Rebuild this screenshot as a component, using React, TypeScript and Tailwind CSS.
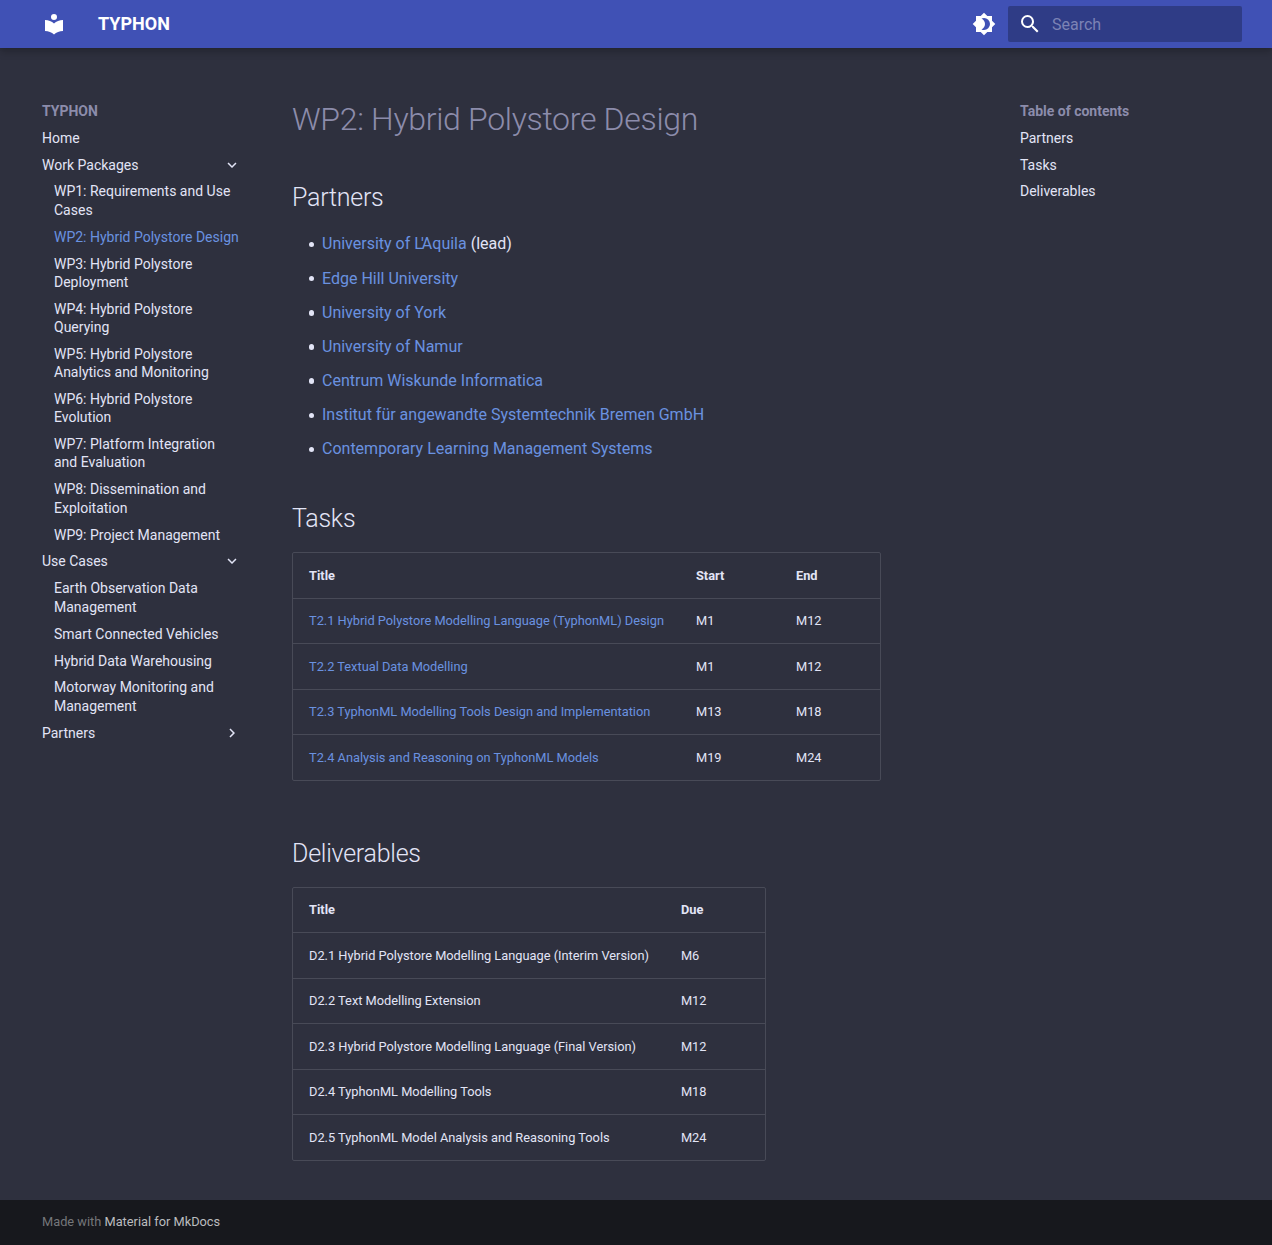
import React from "react";

type IconProps = { d: string; className?: string };

function Icon({ d, className = "size-6" }: IconProps) {
  return (
    <svg viewBox="0 0 24 24" className={`block shrink-0 fill-current ${className}`} aria-hidden="true">
      <path d={d} />
    </svg>
  );
}

const LIBRARY =
  "M12 8a3 3 0 0 0 3-3 3 3 0 0 0-3-3 3 3 0 0 0-3 3 3 3 0 0 0 3 3m0 3.54C9.64 9.35 6.5 8 3 8v11c3.5 0 6.64 1.35 9 3.54 2.36-2.19 5.5-3.54 9-3.54V8c-3.5 0-6.64 1.35-9 3.54Z";
const BRIGHTNESS =
  "M12 18c-.89 0-1.74-.2-2.5-.55C11.56 16.5 13 14.42 13 12c0-2.42-1.44-4.5-3.5-5.45C10.26 6.2 11.11 6 12 6a6 6 0 0 1 6 6 6 6 0 0 1-6 6m8-9.31V4h-4.69L12 .69 8.69 4H4v4.69L.69 12 4 15.31V20h4.69L12 23.31 15.31 20H20v-4.69L23.31 12 20 8.69Z";
const MAGNIFY =
  "M9.5 3A6.5 6.5 0 0 1 16 9.5c0 1.61-.59 3.09-1.56 4.23l.27.27h.79l5 5-1.5 1.5-5-5v-.79l-.27-.27A6.516 6.516 0 0 1 9.5 16 6.5 6.5 0 0 1 3 9.5 6.5 6.5 0 0 1 9.5 3m0 2C7 5 5 7 5 9.5S7 14 9.5 14 14 12 14 9.5 12 5 9.5 5Z";
const CHEVRON = "M8.59 16.58 13.17 12 8.59 7.41 10 6l6 6-6 6-1.41-1.42Z";

type NavItem = { label: string; open?: boolean; children?: string[] };

const NAV: NavItem[] = [
  { label: "Home" },
  {
    label: "Work Packages",
    open: true,
    children: [
      "WP1: Requirements and Use Cases",
      "WP2: Hybrid Polystore Design",
      "WP3: Hybrid Polystore Deployment",
      "WP4: Hybrid Polystore Querying",
      "WP5: Hybrid Polystore Analytics and Monitoring",
      "WP6: Hybrid Polystore Evolution",
      "WP7: Platform Integration and Evaluation",
      "WP8: Dissemination and Exploitation",
      "WP9: Project Management",
    ],
  },
  {
    label: "Use Cases",
    open: true,
    children: [
      "Earth Observation Data Management",
      "Smart Connected Vehicles",
      "Hybrid Data Warehousing",
      "Motorway Monitoring and Management",
    ],
  },
  { label: "Partners", open: false },
];
const ACTIVE = "WP2: Hybrid Polystore Design";

const PARTNERS = [
  "Edge Hill University",
  "University of York",
  "University of Namur",
  "Centrum Wiskunde Informatica",
  "Institut für angewandte Systemtechnik Bremen GmbH",
  "Contemporary Learning Management Systems",
];

const TASKS = [
  ["T2.1 Hybrid Polystore Modelling Language (TyphonML) Design", "M1", "M12"],
  ["T2.2 Textual Data Modelling", "M1", "M12"],
  ["T2.3 TyphonML Modelling Tools Design and Implementation", "M13", "M18"],
  ["T2.4 Analysis and Reasoning on TyphonML Models", "M19", "M24"],
];
const DELIVERABLES = [
  ["D2.1 Hybrid Polystore Modelling Language (Interim Version)", "M6"],
  ["D2.2 Text Modelling Extension", "M12"],
  ["D2.3 Hybrid Polystore Modelling Language (Final Version)", "M12"],
  ["D2.4 TyphonML Modelling Tools", "M18"],
  ["D2.5 TyphonML Model Analysis and Reasoning Tools", "M24"],
];

function Header() {
  return (
    <header className="relative z-10 h-12 bg-[#4051b5] text-white shadow-[0_0_4px_#0000001a,0_4px_8px_#0003]">
      <div className="mx-auto flex h-full w-[1220px] items-center px-1">
        <a className="m-1 p-2" href="#home" aria-label="TYPHON">
          <Icon d={LIBRARY} />
        </a>
        <span className="ml-5 grow text-[18px] leading-[48px] font-bold">TYPHON</span>
        <button className="m-1 p-2" aria-label="Switch theme">
          <Icon d={BRIGHTNESS} />
        </button>
        <div className="flex h-9 w-[234px] items-center rounded-[2px] bg-black/[0.26] pl-[10px]">
          <Icon d={MAGNIFY} />
          <span className="ml-[10px] pt-0.5 text-base text-[#7c83b5]">Search</span>
        </div>
      </div>
    </header>
  );
}

function Sidebar() {
  return (
    <nav className="w-[200px] pt-[23.6px] text-[14px] leading-[18.2px]">
      <p className="font-bold text-[#8c8cab]">TYPHON</p>
      <ul>
        {NAV.map((item) => (
          <li key={item.label}>
            <div className="mt-[8.75px] flex justify-between">
              <a href="#nav">{item.label}</a>
              {item.open !== undefined && (
                <Icon d={CHEVRON} className={item.open ? "mr-px size-[18px] rotate-90" : "mr-px size-[18px]"} />
              )}
            </div>
            {item.children && (
              <ul className="pr-0.5 pl-3">
                {item.children.map((c) => (
                  <li key={c} className="mt-[8.75px]">
                    <a href="#nav" className={c === ACTIVE ? "block text-[#6a92e0]" : "block"}>
                      {c}
                    </a>
                  </li>
                ))}
              </ul>
            )}
          </li>
        ))}
      </ul>
    </nav>
  );
}

function Heading({ children }: { children: string }) {
  return <h2 className="mb-4 text-[25px] leading-[35px] font-light tracking-[-0.01em]">{children}</h2>;
}

function Bullet({ children }: { children: React.ReactNode }) {
  return (
    <li className="flex items-center">
      <span className="mr-2 size-[5.5px] rounded-full bg-[#e2e4f6]" />
      <span>{children}</span>
    </li>
  );
}

function DataTable({ head, rows, linked = false }: { head: string[]; rows: string[][]; linked?: boolean }) {
  return (
    <table className="border-separate border-spacing-0 rounded-[2px] border border-[#484a57] text-left text-[12.8px] leading-[20.48px]">
      <thead>
        <tr>
          {head.map((h) => (
            <th key={h} className="min-w-[100px] px-4 pt-[12.25px] pb-[11.75px] font-bold">
              {h}
            </th>
          ))}
        </tr>
      </thead>
      <tbody>
        {rows.map((r) => (
          <tr key={r[0]}>
            {r.map((cell, i) => (
              <td key={i} className="border-t border-[#484a57] px-4 pt-[12.25px] pb-[11.75px] whitespace-nowrap">
                {linked && i === 0 ? (
                  <a href="#task" className="text-[#6a92e0]">
                    {cell}
                  </a>
                ) : (
                  cell
                )}
              </td>
            ))}
          </tr>
        ))}
      </tbody>
    </table>
  );
}

export default function App() {
  return (
    <div className="flex min-h-[1245px] flex-col bg-[#2e303e] font-[Roboto,sans-serif] text-[#e2e4f6]">
      <Header />
      <div className="mx-auto flex w-[1220px] grow pt-[30px] pl-4">
        <Sidebar />
        <main className="ml-[50px] w-[704px] pt-[20.6px]">
          <h1 className="mb-[39.4px] text-[32px] leading-[41.6px] font-light tracking-[-0.01em] text-[#8c8cab]">
            WP2: Hybrid Polystore Design
          </h1>
          <Heading>Partners</Heading>
          <ul className="mb-[38.8px] flex flex-col gap-2 pt-[0.85px] pl-[16.5px] text-base leading-[26.15px]">
            <Bullet>
              <a href="#partner" className="text-[#6a92e0]">
                University of <span className="tracking-[-1.9px]">L'</span>Aquila
              </a>{" "}
              (lead)
            </Bullet>
            {PARTNERS.map((p) => (
              <Bullet key={p}>
                <a href="#partner" className="text-[#6a92e0]">
                  {p}
                </a>
              </Bullet>
            ))}
          </ul>
          <Heading>Tasks</Heading>
          <DataTable head={["Title", "Start", "End"]} rows={TASKS} linked />
          <div className="mt-[55.2px]">
            <Heading>Deliverables</Heading>
            <DataTable head={["Title", "Due"]} rows={DELIVERABLES} />
          </div>
        </main>
        <nav className="ml-6 pt-[23.63px] text-[14px] leading-[18.2px]">
          <p className="font-bold text-[#8c8cab]">Table of contents</p>
          {["Partners", "Tasks", "Deliverables"].map((t) => (
            <a key={t} href="#toc" className="mt-[8.75px] block">
              {t}
            </a>
          ))}
        </nav>
      </div>
      <footer className="h-[45px] bg-[#17181d]">
        <p className="mx-auto w-[1220px] px-4 pt-3 text-[12.8px] leading-[20.48px] text-[#75767a]">
          Made with <a href="#mkdocs" className="text-[#bbbcbf]">Material for MkDocs</a>
        </p>
      </footer>
    </div>
  );
}
